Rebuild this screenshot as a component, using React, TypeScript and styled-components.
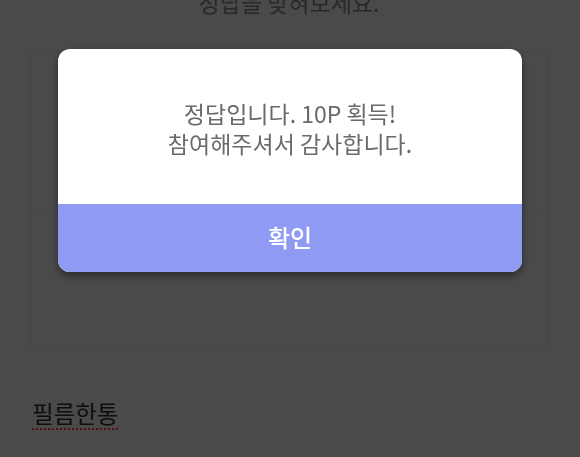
import React from 'react';
import styled, { createGlobalStyle } from 'styled-components';

const GlobalStyle = createGlobalStyle`
  html, body {
    margin: 0;
    padding: 0;
    background: #ffffff;
    overflow: hidden;
  }
  body {
    font-family: 'Noto Sans CJK KR', 'Noto Sans', sans-serif;
  }
`;

const Page = styled.div`
  display: flex;
  flex-direction: column;
  padding: 0 32px 0 30px;
  margin-top: -14px;
  height: 471px;
`;

const Question = styled.p`
  margin: 0;
  text-align: center;
  font-size: 23px;
  line-height: 32px;
  color: #8e8e8e;
`;

const AnswerBox = styled.div`
  margin-top: 34px;
  border: 1px solid #ececec;
  display: flex;
  flex-direction: column;
`;

const AnswerRow = styled.div<{ h: number; last?: boolean }>`
  height: ${(p) => p.h}px;
  border-bottom: ${(p) => (p.last ? 'none' : '1px solid #ececec')};
`;

const FilmLabel = styled.span`
  margin: 50px 0 0 2px;
  align-self: flex-start;
  font-size: 23.5px;
  line-height: 32px;
  color: #333333;
  text-decoration: underline dotted #ff3b30;
  text-decoration-thickness: 2px;
  text-underline-offset: 5px;
`;

const Overlay = styled.div`
  position: fixed;
  inset: 0;
  background: rgba(0, 0, 0, 0.71);
  display: flex;
  justify-content: center;
  align-items: flex-start;
  padding-top: 49px;
`;

const Modal = styled.div`
  width: 464px;
  border-radius: 12px;
  overflow: hidden;
  background: #ffffff;
  box-shadow: 0 4px 8px rgba(0, 0, 0, 0.45);
  display: flex;
  flex-direction: column;
`;

const Message = styled.div`
  height: 155px;
  display: flex;
  flex-direction: column;
  justify-content: center;
  align-items: center;
  padding-top: 2px;
  box-sizing: border-box;
  font-size: 23px;
  line-height: 30px;
  color: #6a6a6a;
  text-align: center;
`;

const ConfirmButton = styled.button`
  height: 68px;
  border: none;
  margin: 0;
  padding: 0 0 4px;
  background: #8f9af4;
  color: #ffffff;
  font-family: inherit;
  font-size: 24px;
  font-weight: 500;
  cursor: pointer;
`;

const App: React.FC = () => {
  return (
    <>
      <GlobalStyle />
      <Page>
        <Question>정답을 맞혀보세요.</Question>
        <AnswerBox>
          <AnswerRow h={159} />
          <AnswerRow h={133} last />
        </AnswerBox>
        <FilmLabel>필름한통</FilmLabel>
      </Page>
      <Overlay>
        <Modal>
          <Message>
            <div>정답입니다. 10P 획득!</div>
            <div>참여해주셔서 감사합니다.</div>
          </Message>
          <ConfirmButton>확인</ConfirmButton>
        </Modal>
      </Overlay>
    </>
  );
};

export default App;
